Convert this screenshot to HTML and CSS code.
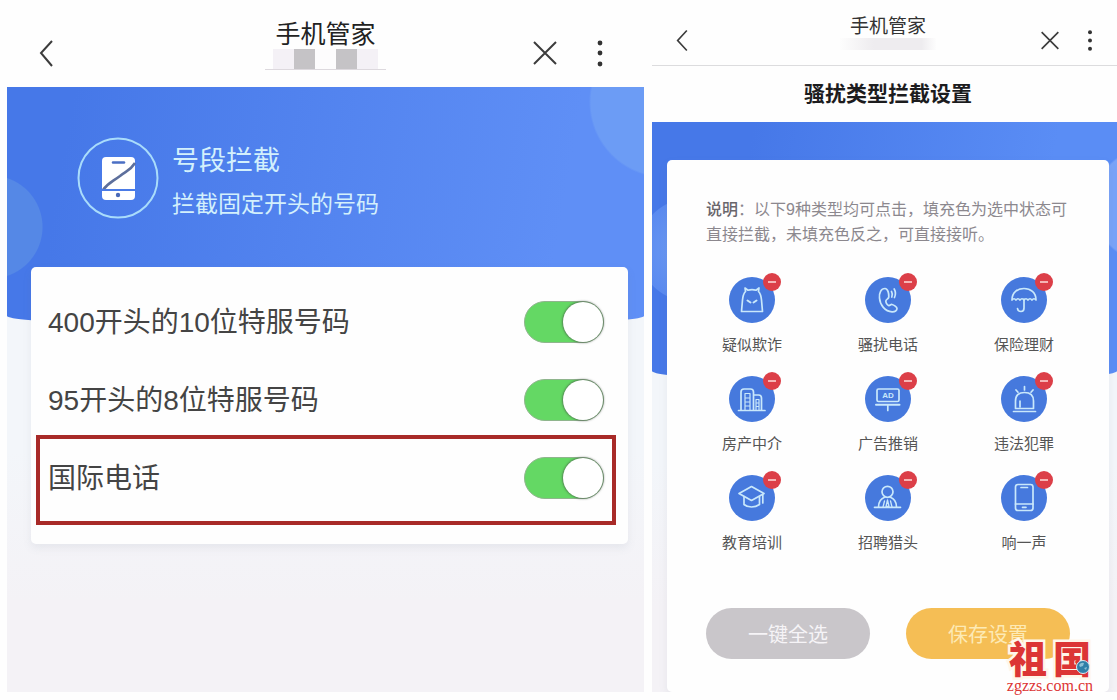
FILE: index.html
```html
<!DOCTYPE html>
<html lang="zh-CN">
<head>
  <meta charset="UTF-8">
  <meta name="viewport" content="width=device-width, initial-scale=1.0">
  <title>手机管家</title>
  <link rel="stylesheet" href="styles.css">
</head>
<body>

  <div class="page">

    <!-- Number segment blocking -->
    <section class="panel panel-segment">
      <header class="topbar">
        <button type="button" class="icon-btn" aria-label="返回">
          <svg viewBox="0 0 24 30"><path d="M13 3 L2 15 L13 28"/></svg>
        </button>
        <div class="topbar-title">
          <h1>手机管家</h1>
          <div class="mask"><i></i><i class="dark"></i><i class="clear"></i><i class="dark"></i><i></i></div>
        </div>
        <div class="topbar-actions">
          <button type="button" class="icon-btn" aria-label="关闭">
            <svg viewBox="0 0 24 30"><path d="M1 4 L23 26 M23 4 L1 26"/></svg>
          </button>
          <button type="button" class="icon-btn" aria-label="更多">
            <svg viewBox="0 0 24 30"><g class="dots"><circle cx="12" cy="5" r="2.4"/><circle cx="12" cy="15" r="2.4"/><circle cx="12" cy="26" r="2.4"/></g></svg>
          </button>
        </div>
      </header>

      <div class="content">
        <div class="hero">
          <svg class="hero-icon" viewBox="0 0 82 82">
            <circle cx="41" cy="41" r="39.5" fill="none" stroke="#a9dcfb" stroke-width="2"/>
            <rect x="25" y="20" width="33" height="43" rx="4" fill="#fff"/>
            <path d="M36 25.5 H47" stroke="#4b6fc4" stroke-width="2.5" stroke-linecap="round"/>
            <path d="M58 26 C53 34 49 34 43 39 C35 45 31 46 26 53" fill="none" stroke="#5d6f9c" stroke-width="2.6"/>
            <path d="M25 53 H58" stroke="#4b7be6" stroke-width="2"/>
            <circle cx="41" cy="58" r="2.2" fill="#4a6ab8"/>
          </svg>
          <div class="hero-text">
            <h2>号段拦截</h2>
            <p>拦截固定开头的号码</p>
          </div>
        </div>

        <div class="card">
          <div class="row">
            <label for="seg400">400开头的10位特服号码</label>
            <input type="checkbox" class="switch" id="seg400" checked>
          </div>
          <div class="row">
            <label for="seg95">95开头的8位特服号码</label>
            <input type="checkbox" class="switch" id="seg95" checked>
          </div>
          <div class="row row-marked">
            <label for="segIntl">国际电话</label>
            <input type="checkbox" class="switch" id="segIntl" checked>
          </div>
        </div>
      </div>
    </section>

    <!-- Nuisance type blocking -->
    <section class="panel panel-types">
      <header class="topbar">
        <button type="button" class="icon-btn" aria-label="返回">
          <svg viewBox="0 0 24 30"><path d="M13 3 L2 15 L13 27"/></svg>
        </button>
        <div class="topbar-title">
          <h1>手机管家</h1>
          <div class="mask"></div>
        </div>
        <div class="topbar-actions">
          <button type="button" class="icon-btn" aria-label="关闭">
            <svg viewBox="0 0 24 30"><path d="M2 5 L22 25 M22 5 L2 25"/></svg>
          </button>
          <button type="button" class="icon-btn" aria-label="更多">
            <svg viewBox="0 0 24 30"><g class="dots"><circle cx="12" cy="5" r="2.4"/><circle cx="12" cy="15" r="2.4"/><circle cx="12" cy="25" r="2.4"/></g></svg>
          </button>
        </div>
      </header>
      <h2 class="subtitle">骚扰类型拦截设置</h2>

      <div class="content">
        <div class="hero"></div>

        <div class="card">
          <p class="note"><strong>说明</strong>：以下9种类型均可点击，填充色为选中状态可直接拦截，未填充色反之，可直接接听。</p>

          <div class="types">
            <button type="button" class="type" aria-pressed="true">
              <span class="type-icon"><svg viewBox="0 0 46 46">
                <path d="M12.5 34.5 L13.5 23 C14 18 15 16 16.5 14.5 L16 11 L19 13.2 Q23 12 27 13.2 L30 11 L29.5 14.5 C31 16 32 18 32.5 23 L33.5 34.5 Z"/>
                <path d="M18.5 23.5 L21.5 25.5 M27.5 23.5 L24.5 25.5" stroke-width="2"/>
              </svg></span>
              <span>疑似欺诈</span>
            </button>
            <button type="button" class="type" aria-pressed="true">
              <span class="type-icon"><svg viewBox="0 0 46 46">
                <path d="M20 11.5 C16 11.5 14 16 14.5 21 C15 28 20 34.5 27 34.8 C30 35 32 33.5 32 31.5 C32 30 29 28 27 27.5 C25.5 27.2 25 29 23.5 28.5 C21.5 27.5 20.5 25 21 23.5 C21.5 22 23.5 22 23.8 20 C24 17 23 11.5 20 11.5 Z"/>
                <path d="M26.5 14.5 Q28 17 26.8 20 M29.2 12 Q31.5 16 29.5 20.5"/>
              </svg></span>
              <span>骚扰电话</span>
            </button>
            <button type="button" class="type" aria-pressed="true">
              <span class="type-icon"><svg viewBox="0 0 46 46">
                <path d="M11 23 C11 15.5 16.5 11.5 23 11.5 S35 15.5 35 23 Q33 20.5 31 23 Q29 20.5 27 23 Q25 20.5 23 23 Q21 20.5 19 23 Q17 20.5 15 23 Q13 20.5 11 23 Z"/>
                <path d="M23 22 V31 Q23 34.5 20 34.5 Q16.8 34.5 16.5 31.5"/>
              </svg></span>
              <span>保险理财</span>
            </button>
            <button type="button" class="type" aria-pressed="true">
              <span class="type-icon"><svg viewBox="0 0 46 46">
                <path d="M9.5 34.5 H36 M12 34 V16 Q12 13 15 13 H21.5 Q24.5 13 24.5 16 V34 M24.5 19 H29.5 Q32.5 19 32.5 22 V34"/>
                <path d="M16 34 V17.5 H21 V34 M16 22 H21 M16 26 H21 M16 30 H21 M27 34 V23.5 H30 V34 M27 27 H30 M27 30.5 H30" stroke-width="1.2"/>
              </svg></span>
              <span>房产中介</span>
            </button>
            <button type="button" class="type" aria-pressed="true">
              <span class="type-icon"><svg viewBox="0 0 46 46">
                <rect x="12" y="13" width="22" height="12.5" rx="1.5"/>
                <path d="M11 28.8 H34.5" stroke-width="2"/>
                <path d="M22.8 29 V34.5"/>
                <text x="23" y="22" class="ad">AD</text>
              </svg></span>
              <span>广告推销</span>
            </button>
            <button type="button" class="type" aria-pressed="true">
              <span class="type-icon"><svg viewBox="0 0 46 46">
                <path d="M14.5 32.5 V25 C14.5 19 18 16.5 23.5 16.5 S32.5 19 32.5 25 V32.5 Z"/>
                <path d="M12.5 35.5 H34.5 M19 31 V25 M23.5 10.5 V14 M15 14 L17 16.2 M32 14 L30 16.2"/>
              </svg></span>
              <span>违法犯罪</span>
            </button>
            <button type="button" class="type" aria-pressed="true">
              <span class="type-icon"><svg viewBox="0 0 46 46">
                <path d="M10 18.5 L22.5 11.5 L35 18.5 L22.5 25.5 Z"/>
                <path d="M15 21.5 V29.5 Q18 32 22.5 32 T30.5 29.5 V21.5 M33.8 19.5 V28"/>
              </svg></span>
              <span>教育培训</span>
            </button>
            <button type="button" class="type" aria-pressed="true">
              <span class="type-icon"><svg viewBox="0 0 46 46">
                <circle cx="22.5" cy="16.8" r="5.5"/>
                <path d="M9.5 32.3 H35.5 M13.5 32 C13.5 27 16 23.5 20 22 M31.5 32 C31.5 27 29 23.5 25 22"/>
                <path d="M18 32 L19.5 26 M27 32 L25.5 26 M22.5 25 L21 31.5 H24 Z" stroke-width="1.3"/>
              </svg></span>
              <span>招聘猎头</span>
            </button>
            <button type="button" class="type" aria-pressed="true">
              <span class="type-icon"><svg viewBox="0 0 46 46">
                <rect x="14.5" y="9.5" width="17.5" height="26" rx="2.5"/>
                <path d="M14.5 29 H32 M20 12.5 H26.5 M21.5 32.3 H25"/>
              </svg></span>
              <span>响一声</span>
            </button>
          </div>

          <div class="actions">
            <button type="button" class="btn btn-grey">一键全选</button>
            <button type="button" class="btn btn-save">保存设置</button>
          </div>
        </div>
      </div>
    </section>

    <a class="sitemark" href="#">
      <span class="sitemark-name"><span>祖</span><span>国</span></span>
      <span class="sitemark-url">zgzzs.com.cn</span>
      <svg class="globe" viewBox="0 0 14 14">
        <circle cx="7" cy="7" r="6.5" fill="#2f7fa8" stroke="#d9eaf2"/>
        <path d="M3 5 Q5 2 8 3 L7 6 L4 7 Z M8 8 L11 7 L10 10 Z" fill="#8cc0d4"/>
      </svg>
    </a>

  </div>

</body>
</html>
```
FILE: styles.css
```css
* {
  box-sizing: border-box;
}

body {
  margin: 0;
  font-family: "Liberation Sans", "Noto Sans CJK SC", sans-serif;
  background-color: #fefefe;
  color: #444;
}

h1, h2, p {
  margin: 0;
  font-weight: normal;
}

button {
  padding: 0;
  border: none;
  background: none;
  font-family: inherit;
  color: inherit;
  cursor: pointer;
}

.page {
  position: relative;
  display: flex;
  gap: 8px;
  min-height: 100vh;
  padding: 0 0 8px 7px;
}

.panel {
  display: flex;
  flex-direction: column;
  min-width: 0;
}

.panel-segment {
  flex: 637;
}

.panel-types {
  flex: 465;
}

/* Top bar */
.topbar {
  display: grid;
  grid-template-columns: 1fr auto 1fr;
  align-items: center;
  height: 87px;
  padding: 19px 32px 0;
}

.topbar-title {
  align-self: start;
  text-align: center;
}

.topbar h1 {
  font-size: 25px;
  line-height: 30px;
  color: #222;
}

.topbar-actions {
  display: flex;
  justify-content: flex-end;
  gap: 31px;
}

.icon-btn {
  width: 24px;
  height: 30px;
}

.icon-btn svg {
  display: block;
  width: 100%;
  height: 100%;
  fill: none;
  stroke: #3c3c3c;
  stroke-width: 2;
}

.icon-btn .dots {
  fill: #333;
  stroke: none;
}

.mask {
  display: flex;
  justify-content: center;
  height: 21px;
  margin: 0 -10px;
  border-bottom: 1px solid #ddd9de;
}

.mask i {
  width: 21px;
  background-color: #f4f1f6;
}

.mask .dark {
  background-color: #c5c3c6;
}

.mask .clear {
  background-color: #fdfcfd;
}

.panel-types .topbar {
  height: 66px;
  padding: 15px 17px 0 24px;
  border-bottom: 1px solid #dcdcde;
}

.panel-types h1 {
  font-size: 19px;
  line-height: 23px;
  color: #333;
}

.panel-types .topbar-actions {
  gap: 20px;
}

.panel-types .icon-btn {
  width: 20px;
  height: 25px;
}

.panel-types .mask {
  height: 12px;
  border-bottom: none;
  background: linear-gradient(90deg, #fdfdfd, #eeecef 35%, #eeecef 85%, #fdfdfd);
}

.subtitle {
  padding-left: 7px;
  font-size: 21px;
  font-weight: bold;
  line-height: 56px;
  text-align: center;
  color: #1c1c1e;
}

/* Blue area and white card */
.content {
  flex: 1;
  display: flex;
  flex-direction: column;
  overflow: hidden;
  background: linear-gradient(#f3f6fa 60%, #f4f2f6 85%);
}

.hero {
  display: flex;
  align-items: flex-start;
  gap: 13px;
  height: 240px;
  padding: 50px 0 0 70px;
  border-radius: 0 0 50% 50% / 0 0 11px 11px;
  background:
    radial-gradient(circle 52px at -16px 140px, #5588e6 51px, transparent 52px),
    radial-gradient(circle 76px at calc(100% + 21px) 15px, #6c9cf5 74px, transparent 76px),
    linear-gradient(100deg, #4678e8 10%, #5f8ff6 85%);
}

.hero-icon {
  width: 82px;
  height: 82px;
}

.hero-text {
  color: #d3f0fc;
}

.hero-text h2 {
  font-size: 27px;
  line-height: 48px;
}

.hero-text p {
  font-size: 23px;
  line-height: 38px;
}

.card {
  margin: -60px 16px 0 24px;
  padding: 16px 12px 19px 5px;
  border-radius: 5px;
  background-color: #fefefe;
  box-shadow: 0 4px 8px rgba(110, 120, 140, 0.1);
}

.row {
  display: flex;
  align-items: center;
  justify-content: space-between;
  height: 78px;
  padding: 0 12px;
  font-size: 28px;
}

.row label {
  padding-bottom: 4px;
}

.row-marked {
  height: 90px;
  margin-top: -4px;
  padding: 0 8px 4px;
  border: 4px solid #a82a28;
}

.switch {
  appearance: none;
  width: 80px;
  height: 42px;
  margin: 0;
  border: 1px solid #8fb58d;
  border-radius: 21px;
  background-color: #ddd;
  cursor: pointer;
}

.switch::before {
  content: "";
  display: block;
  width: 40px;
  height: 40px;
  border-radius: 50%;
  background-color: #fff;
  box-shadow: 0 0 2px 1px rgba(70, 80, 70, 0.6);
}

.switch:checked {
  background-color: #64d864;
}

.switch:checked::before {
  margin-left: auto;
}

/* Nuisance types */
.panel-types .hero {
  flex: none;
  height: 260px;
  background:
    radial-gradient(circle 52px at 38px 128px, #6796f2 20px, #5a8af0 51px, transparent 52px),
    radial-gradient(circle 58px at calc(100% + 33px) 83px, #79a3f8 56px, transparent 58px),
    linear-gradient(100deg, #4678e8 20%, #5a8df5 80%);
}

.panel-types .card {
  flex: 1;
  margin: -222px 8px 0 15px;
  padding: 37px 39px 33px;
}

.note {
  font-size: 16px;
  line-height: 25px;
  color: #8c888e;
}

.note strong {
  font-weight: 500;
  color: #69666b;
}

.types {
  display: grid;
  grid-template-columns: repeat(3, 92px);
  justify-content: space-between;
  row-gap: 19px;
  margin-top: 30px;
}

.type {
  display: flex;
  flex-direction: column;
  align-items: center;
  gap: 10px;
  font-size: 15px;
  line-height: 24px;
  color: #555;
}

.type-icon {
  position: relative;
  width: 46px;
  height: 46px;
  border-radius: 50%;
  background-color: #4679dd;
}

.type-icon svg {
  display: block;
  fill: none;
  stroke: #c9e8fb;
  stroke-width: 1.7;
  stroke-linejoin: round;
  stroke-linecap: round;
}

.type-icon .ad {
  font-size: 8px;
  font-weight: bold;
  text-anchor: middle;
  fill: #c9e8fb;
  stroke: none;
}

/* Red minus badge */
.type-icon::after {
  content: "";
  position: absolute;
  top: -4px;
  right: -6px;
  width: 18px;
  height: 18px;
  border-radius: 50%;
  background: linear-gradient(#f5b5b5, #f5b5b5) center / 8px 2px no-repeat #dc3f48;
}

.actions {
  display: flex;
  justify-content: space-between;
  gap: 36px;
  margin-top: 53px;
}

.btn {
  flex: 1;
  height: 51px;
  border-radius: 26px;
  font-size: 20px;
}

.btn-grey {
  background-color: #c9c6ca;
  color: #f6f4f7;
}

.btn-save {
  background-color: #f5be55;
  color: #fdeab5;
}

/* Site mark over the lower right corner */
.sitemark {
  position: absolute;
  right: 24px;
  bottom: 6px;
  display: flex;
  flex-direction: column;
  align-items: center;
  color: #dc3535;
  text-decoration: none;
}

.sitemark-name {
  display: flex;
  gap: 6px;
  font-size: 38px;
  font-weight: 900;
  line-height: 36px;
  -webkit-text-stroke: 5px #fff6ea;
  paint-order: stroke fill;
}

.sitemark-url {
  font-family: "Liberation Serif", serif;
  font-size: 16px;
  line-height: 16px;
  -webkit-text-stroke: 3px #fff;
  paint-order: stroke fill;
}

.globe {
  position: absolute;
  right: 3px;
  top: 18px;
  width: 14px;
  height: 14px;
}
```
